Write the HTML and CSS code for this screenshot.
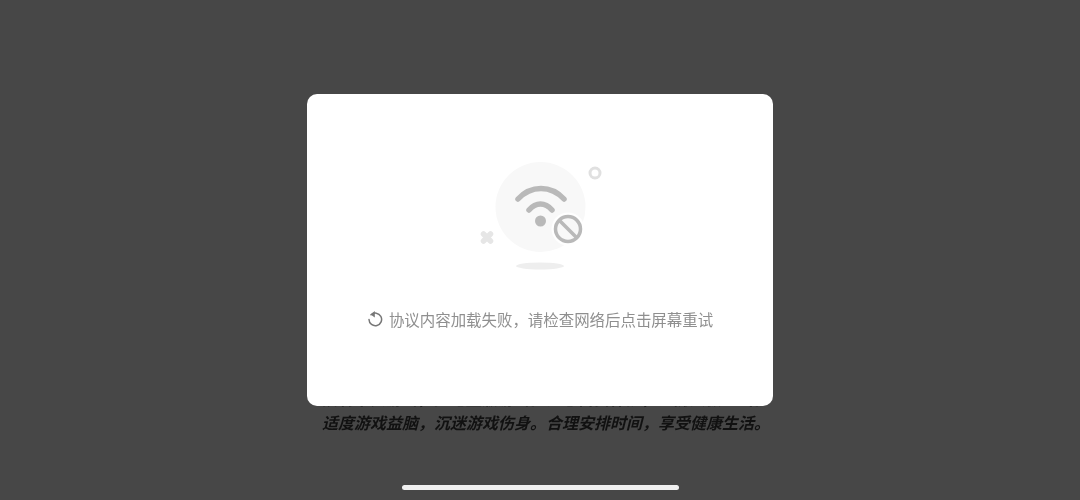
FILE: index.html
```html
<!DOCTYPE html>
<html lang="zh">
<head>
<meta charset="utf-8">
<title>协议</title>
<link rel="stylesheet" href="styles.css">
</head>
<body>
<main class="page">
  <div class="notice">
    <p>抵制不良游戏，拒绝盗版游戏。注意自我保护，谨防受骗上当。</p>
    <p>适度游戏益脑，沉迷游戏伤身。合理安排时间，享受健康生活。</p>
  </div>
  <div class="home-bar"></div>
</main>
<div class="overlay">
  <section class="card">
    <svg class="art" width="140" height="130" viewBox="0 0 140 130" aria-hidden="true">
      <circle cx="70.500" cy="57" r="45" fill="#f8f8f8"/>
      <ellipse cx="70" cy="116" rx="24" ry="3.500" fill="#eeeeee"/>
      <circle cx="125" cy="23" r="5" fill="none" stroke="#e0e0e0" stroke-width="3"/>
      <path d="M13.500 84L20.500 91M20.500 84L13.500 91" fill="none" stroke="#e6e6e6" stroke-width="5.500" stroke-linecap="round"/>
      <path d="M48 49C61 35 81 35 94 49" fill="none" stroke="#b9b9b9" stroke-width="5.500" stroke-linecap="round"/>
      <path d="M59 60C66 52 75 52 82 60" fill="none" stroke="#b9b9b9" stroke-width="5.500" stroke-linecap="round"/>
      <circle cx="70.500" cy="71" r="5.500" fill="#b9b9b9"/>
      <circle cx="98" cy="79" r="16.500" fill="#ffffff"/>
      <circle cx="98" cy="79" r="12.500" fill="#f8f8f8" stroke="#b9b9b9" stroke-width="3.500"/>
      <path d="M89.500 70.500L106.500 87.500" stroke="#b9b9b9" stroke-width="3.500"/>
    </svg>
    <div class="message">
      <svg class="retry" width="16" height="18" viewBox="0 0 16 18" aria-hidden="true">
        <path d="M4 4.800A6.300 6.300 0 1 1 2 9.500" fill="none" stroke="#777777" stroke-width="1.500" stroke-linecap="round"/>
        <path d="M7.800 1L3.600 4.600 7.800 7.400z" fill="#777777"/>
      </svg>
      <span class="message-text">协议内容加载失败，请检查网络后点击屏幕重试</span>
    </div>
  </section>
</div>
</body>
</html>
```
FILE: styles.css
```css
* {
  box-sizing: border-box;
}

html,
body {
  margin: 0;
  height: 500px;
  overflow: hidden;
}

body {
  background: #474747;
  font-family: "Noto Sans CJK SC", "Liberation Sans", sans-serif;
}

.page {
  height: 500px;
  display: flex;
  flex-direction: column;
  align-items: center;
  justify-content: flex-end;
  padding-bottom: 10px;
}

.notice {
  margin-bottom: 51px;
  padding-left: 12px;
  color: #111111;
  font-size: 16px;
  font-weight: 700;
  font-style: italic;
  line-height: 24px;
  text-align: center;
  white-space: nowrap;
  filter: blur(0.4px);
}

.notice p {
  margin: 0;
}

.home-bar {
  width: 277px;
  height: 5px;
  border-radius: 3px;
  background: #f0f0f0;
}

.overlay {
  position: absolute;
  inset: 0;
  display: flex;
  align-items: center;
  justify-content: center;
}

.card {
  width: 466px;
  height: 312px;
  padding-top: 56px;
  border-radius: 10px;
  background: #ffffff;
  display: flex;
  flex-direction: column;
  align-items: center;
}

.art {
  display: block;
  filter: blur(0.5px);
}

.message {
  margin-top: 26px;
  display: flex;
  align-items: center;
  gap: 6px;
}

.retry {
  display: block;
  flex: none;
}

.message-text {
  color: #8f8f8f;
  font-size: 15.450px;
  line-height: 26px;
  white-space: nowrap;
  filter: blur(0.3px);
}
```
